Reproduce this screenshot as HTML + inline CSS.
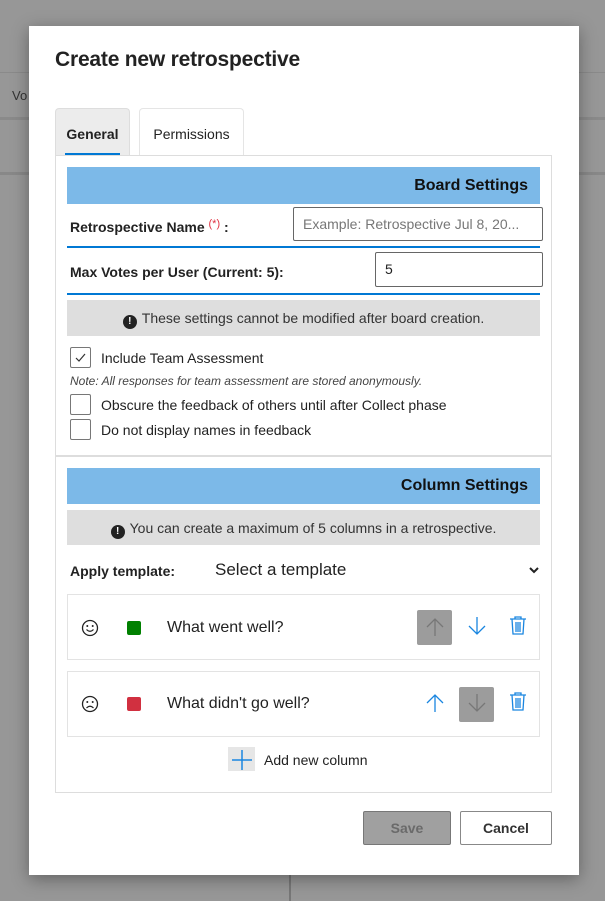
<!DOCTYPE html>
<html><head><meta charset="utf-8"><style>
*{box-sizing:border-box;margin:0;padding:0}
body{width:605px;height:901px;background:#979797;font-family:"Liberation Sans",sans-serif;color:#222;position:relative;overflow:hidden}
.a{position:absolute}
.dlg{left:29px;top:26px;width:550px;height:849px;background:#fff;box-shadow:0 4px 16px rgba(0,0,0,.35)}
.bar{background:#7cb9e8;font-weight:bold;font-size:16px;text-align:right;padding-right:12px;color:#111}
.note{background:#dedede;font-size:14px;text-align:center;color:#333}
.ex{display:inline-block;width:14px;height:14px;border-radius:50%;background:#222;color:#fff;font-size:10px;font-weight:bold;line-height:14px;text-align:center;vertical-align:-1px;margin-right:5px}
.cb{width:21px;height:21px;border:1px solid #777;border-radius:2px;background:#fff}
.lbl{font-size:14px;color:#222}
.inp{border:1px solid #666;border-radius:2px;background:#fff;font-size:14px;padding-left:9px}
.bl{height:2px;background:#0078d4;left:67px;width:473px}
.row{left:67px;width:473px;height:66px;border:1px solid #e3e3e3;background:#fff}
</style></head><body>
<div class="a" style="left:0;top:72px;width:605px;height:1px;background:#8a8a8a"></div>
<div class="a" style="left:0;top:117px;width:605px;height:3px;background:#8a8a8a"></div>
<div class="a" style="left:0;top:172px;width:605px;height:3px;background:#888"></div>
<div class="a" style="left:12px;top:88px;font-size:13px;color:#333">Vo</div>
<div class="a" style="left:289px;top:870px;width:2px;height:31px;background:#777"></div>
<div class="a dlg"></div>
<div class="a" style="left:55px;top:48px;font-size:21px;font-weight:600;color:#222;letter-spacing:-0.2px">Create new retrospective</div>
<div class="a" style="left:55px;top:108px;width:75px;height:48px;background:#ececec;border:1px solid #ddd;border-bottom:none;border-radius:4px 4px 0 0;font-size:14px;font-weight:600;line-height:50px;text-align:center">General</div>
<div class="a" style="left:65px;top:153px;width:55px;height:3px;background:#0078d4"></div>
<div class="a" style="left:139px;top:108px;width:105px;height:48px;background:#fff;border:1px solid #e5e5e5;border-bottom:none;border-radius:4px 4px 0 0;font-size:14px;line-height:50px;text-align:center">Permissions</div>
<div class="a" style="left:55px;top:155px;width:497px;height:638px;border:1px solid #ddd"></div>
<div class="a bar" style="left:67px;top:167px;width:473px;height:37px;line-height:38px">Board Settings</div>
<div class="a lbl" style="left:70px;top:218px;font-weight:600">Retrospective Name <span style="color:#e03040;font-size:11px;vertical-align:5px;font-weight:normal">(*)</span> :</div>
<div class="a inp" style="left:293px;top:207px;width:250px;height:34px;line-height:32px;color:#777">Example: Retrospective Jul 8, 20...</div>
<div class="a bl" style="top:246px"></div>
<div class="a lbl" style="left:70px;top:264px;font-weight:600">Max Votes per User (Current: 5):</div>
<div class="a inp" style="left:375px;top:252px;width:168px;height:35px;line-height:33px">5</div>
<div class="a bl" style="top:293px"></div>
<div class="a note" style="left:67px;top:300px;width:473px;height:36px;line-height:37px"><span class="ex">!</span>These settings cannot be modified after board creation.</div>
<div class="a cb" style="left:70px;top:347px"><svg width="19" height="19"><path d="M5 10l3 3 6-7" fill="none" stroke="#333" stroke-width="1.2"/></svg></div>
<div class="a lbl" style="left:101px;top:350px">Include Team Assessment</div>
<div class="a" style="left:70px;top:374px;font-size:12px;font-style:italic;color:#444">Note: All responses for team assessment are stored anonymously.</div>
<div class="a cb" style="left:70px;top:394px"></div>
<div class="a lbl" style="left:101px;top:397px">Obscure the feedback of others until after Collect phase</div>
<div class="a cb" style="left:70px;top:419px"></div>
<div class="a lbl" style="left:101px;top:422px">Do not display names in feedback</div>
<div class="a" style="left:55px;top:455px;width:497px;height:2px;background:#ddd"></div>
<div class="a bar" style="left:67px;top:468px;width:473px;height:36px;line-height:36px">Column Settings</div>
<div class="a note" style="left:67px;top:510px;width:473px;height:35px;line-height:36px"><span class="ex">!</span>You can create a maximum of 5 columns in a retrospective.</div>
<div class="a lbl" style="left:70px;top:563px;font-weight:600">Apply template:</div>
<div class="a" style="left:215px;top:560px;font-size:17px;color:#222">Select a template</div>
<svg class="a" style="left:528px;top:565px" width="12" height="10"><path d="M2 3l4 4 4-4" fill="none" stroke="#222" stroke-width="2"/></svg>
<div class="a row" style="top:594px"></div>
<div class="a row" style="top:671px"></div>
<svg class="a" style="left:81px;top:619px" width="18" height="18"><circle cx="9" cy="9" r="7.5" fill="none" stroke="#222" stroke-width="1.3"/><circle cx="6.3" cy="7" r="1" fill="#222"/><circle cx="11.7" cy="7" r="1" fill="#222"/><path d="M5.5 10.5q3.5 3.5 7 0" fill="none" stroke="#222" stroke-width="1.2"/></svg>
<svg class="a" style="left:81px;top:695px" width="18" height="18"><circle cx="9" cy="9" r="7.5" fill="none" stroke="#222" stroke-width="1.3"/><circle cx="6.3" cy="7" r="1" fill="#222"/><circle cx="11.7" cy="7" r="1" fill="#222"/><path d="M5.5 13q3.5 -3.5 7 0" fill="none" stroke="#222" stroke-width="1.2"/></svg>
<div class="a" style="left:127px;top:621px;width:14px;height:14px;background:#008000;border-radius:2px"></div>
<div class="a" style="left:127px;top:697px;width:14px;height:14px;background:#d13040;border-radius:2px"></div>
<div class="a" style="left:167px;top:619px;font-size:16px">What went well?</div>
<div class="a" style="left:167px;top:695px;font-size:16px">What didn't go well?</div>
<div class="a" style="left:417px;top:610px;width:35px;height:35px;background:#9c9c9c;border-radius:2px"></div>
<div class="a" style="left:459px;top:687px;width:35px;height:35px;background:#9c9c9c;border-radius:2px"></div>
<svg class="a" style="left:424px;top:616px" width="22" height="22"><path d="M11 20V3M3 11l8-8 8 8" fill="none" stroke="#777" stroke-width="1.3"/></svg>
<svg class="a" style="left:466px;top:615px" width="22" height="22"><path d="M11 2v17M3 11l8 8 8-8" fill="none" stroke="#1a86e0" stroke-width="1.3"/></svg>
<svg class="a" style="left:424px;top:692px" width="22" height="22"><path d="M11 20V3M3 11l8-8 8 8" fill="none" stroke="#1a86e0" stroke-width="1.3"/></svg>
<svg class="a" style="left:466px;top:692px" width="22" height="22"><path d="M11 2v17M3 11l8 8 8-8" fill="none" stroke="#777" stroke-width="1.3"/></svg>
<svg class="a" style="left:509px;top:616px" width="18" height="20"><path d="M1 3h16M6 3V1h6v2M3 3l1 15h10l1-15M7 6v10M9 6v10M11 6v10" fill="none" stroke="#1a86e0" stroke-width="1.3"/></svg>
<svg class="a" style="left:509px;top:692px" width="18" height="20"><path d="M1 3h16M6 3V1h6v2M3 3l1 15h10l1-15M7 6v10M9 6v10M11 6v10" fill="none" stroke="#1a86e0" stroke-width="1.3"/></svg>
<div class="a" style="left:228px;top:747px;width:27px;height:24px;background:#e6e6e6"></div>
<svg class="a" style="left:231px;top:749px" width="22" height="22"><path d="M11 1v20M1 11h20" stroke="#1a86e0" stroke-width="1.5"/></svg>
<div class="a lbl" style="left:264px;top:752px">Add new column</div>
<div class="a" style="left:363px;top:811px;width:88px;height:34px;background:#a0a0a0;border:1px solid #777;border-radius:2px;font-size:14px;font-weight:600;color:#6a6a6a;text-align:center;line-height:32px">Save</div>
<div class="a" style="left:460px;top:811px;width:92px;height:34px;background:#fff;border:1px solid #888;border-radius:2px;font-size:14px;font-weight:600;color:#333;text-align:center;line-height:32px">Cancel</div>
</body></html>
